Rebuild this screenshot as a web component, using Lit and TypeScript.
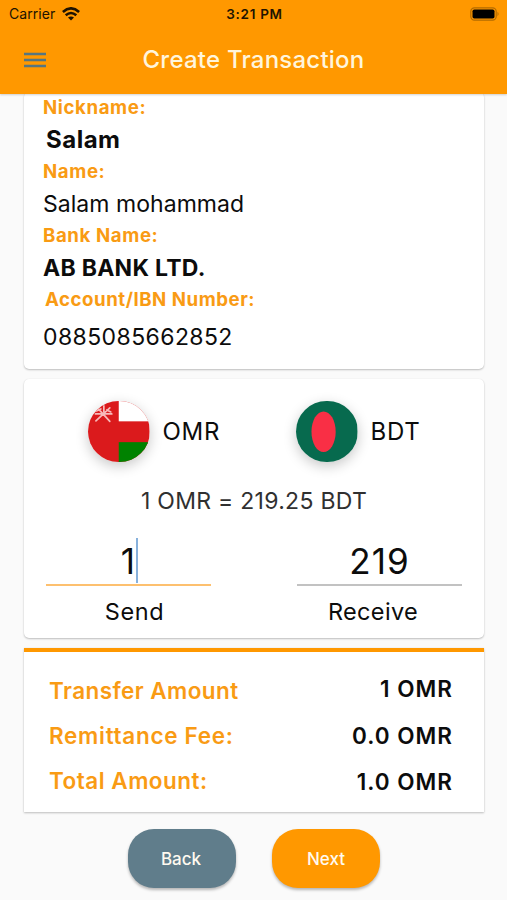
import { LitElement, html, css, svg } from "lit";
import { customElement, property } from "lit/decorators.js";

const omanFlag = svg`
  <rect width="62" height="62" fill="#db1a1c"/>
  <rect x="31" width="31" height="20.5" fill="#fff"/>
  <rect x="31" y="41.5" width="31" height="20.5" fill="#008200"/>
  <g stroke="#f7b9b9" stroke-width="1.7" fill="none" stroke-linecap="round">
    <path d="M8 20 22 7M10 7.500 22 20.500M7.500 13H24M16 5V11M8.500 10 13 8M19 9 23 11"/>
  </g>`;

const bangladeshFlag = svg`
  <rect width="62" height="62" fill="#076a4e"/>
  <ellipse cx="27.800" cy="31" rx="12.200" ry="20.500" fill="#f92f45"/>`;

@customElement("currency-badge")
class CurrencyBadge extends LitElement {
  @property() code = "";
  static styles = css`
    :host { display: flex; align-items: center; }
    .flag {
      width: 61.5px; height: 61.5px; border-radius: 50%; overflow: hidden;
      box-shadow: 0 4px 13px rgba(0, 0, 0, 0.22);
    }
    .flag svg { display: block; width: 100%; height: 100%; }
    .code {
      margin-left: 13px; padding-top: 2px; font-size: 24px; line-height: 30px;
      letter-spacing: 0.75px; color: #0c0c0c;
    }
  `;
  render() {
    return html`
      <div class="flag">
        <svg viewBox="0 0 62 62">${this.code === "OMR" ? omanFlag : bangladeshFlag}</svg>
      </div>
      <span class="code">${this.code}</span>`;
  }
}

@customElement("app-root")
class AppRoot extends LitElement {
  static styles = css`
    :host {
      display: block; width: 507px; height: 900px; overflow: hidden;
      background: #fafafa; color: #0c0c0c;
      font-family: "Inter", "Liberation Sans", sans-serif;
    }
    * { box-sizing: border-box; }
    .header {
      position: relative; z-index: 1; height: 94px; background: #ff9800;
      box-shadow: 0 1px 2px rgba(0, 0, 0, 0.18);
    }
    .status {
      display: grid; grid-template-columns: 1fr auto 1fr; align-items: center;
      height: 27px; padding: 0 7px 0 9px; color: #201300;
    }
    .carrier { display: flex; align-items: center; gap: 7px; font-size: 14px; }
    .carrier span { letter-spacing: 0.06px; }
    .wifi, .battery { display: block; }
    .clock { font-size: 13.5px; font-weight: 600; letter-spacing: 0.7px; }
    .battery { justify-self: end; }
    .bar {
      display: grid; grid-template-columns: 1fr auto 1fr; align-items: center;
      height: 64px; padding: 0 24px;
    }
    .menu { display: block; margin-top: 1px; }
    .title { color: #fff5dc; font-size: 24px; font-weight: 500; letter-spacing: 0.22px; }

    .body { display: flex; flex-direction: column; padding: 0 23px 0 24px; }
    .card {
      background: #fff; border-radius: 5px;
      box-shadow: 0 1px 2px rgba(0, 0, 0, 0.24), 0 0 1px rgba(0, 0, 0, 0.08);
    }
    .recipient { margin-top: -2px; height: 277px; padding-left: 19px; }
    .recipient div { height: 32px; line-height: 32px; white-space: nowrap; }
    .recipient .label { color: #f99b14; font-size: 18.7px; font-weight: 700; letter-spacing: 0.58px; }
    .recipient .account { padding-left: 2px; letter-spacing: 0.51px; }
    .recipient .nickname { padding-left: 3px; font-size: 24px; font-weight: 700; letter-spacing: 0.5px; }
    .recipient .name { font-size: 23px; letter-spacing: 0.04px; }
    .recipient .bank { font-size: 23px; font-weight: 700; letter-spacing: 0.28px; }
    .recipient .number { height: 42px; line-height: 42px; font-size: 23px; letter-spacing: 0.41px; }

    .exchange { margin-top: 10px; height: 259px; padding-top: 21.500px; }
    .pair { display: grid; grid-template-columns: 208px 1fr; padding-left: 64px; }
    .rate {
      margin-top: 24px; line-height: 30px; text-align: center;
      font-size: 23px; letter-spacing: 0.28px; color: #303030;
    }
    .fields { display: flex; justify-content: space-between; margin-top: 22px; padding: 0 22px; }
    .field { width: 165px; text-align: center; }
    .amount {
      display: flex; justify-content: center; height: 48px; line-height: 47px;
      border-bottom: 2px solid #c2c2c2; font-size: 35px; letter-spacing: 1.1px;
    }
    .active .amount { border-color: #fdc06f; }
    .digits { position: relative; }
    .caret { position: absolute; right: -2px; top: 0; width: 2.4px; height: 45px; background: #87b1dc; }
    .caption { margin-top: 11px; line-height: 30px; font-size: 23.5px; letter-spacing: 0.35px; }
    .active .caption { padding-left: 12px; letter-spacing: 0.55px; }
    .passive .caption { padding-right: 13px; }

    .summary {
      display: flex; justify-content: space-between; margin-top: 10px; height: 164px;
      padding: 0 31px 0 25px; border-top: 4px solid #ff9800; border-radius: 0;
      font-size: 22.5px; font-weight: 600;
    }
    .keys { padding-top: 16px; line-height: 45px; color: #f99b14; }
    .values { padding-top: 14px; line-height: 46.500px; text-align: right; letter-spacing: 1px; }
    .transfer { letter-spacing: 0.42px; }
    .fee { letter-spacing: 0.7px; }
    .total { letter-spacing: 0.49px; }

    .actions { display: flex; justify-content: center; gap: 36px; margin-top: 17px; }
    .button {
      width: 108px; height: 59px; padding: 0; border: 0; border-radius: 26px;
      background: #ff9800; color: #fffaf0; font: 500 17px "Inter", sans-serif;
      box-shadow: 0 2px 3px rgba(0, 0, 0, 0.28);
    }
    .back { padding-right: 2px; background: #607d8b; }
  `;

  render() {
    return html`
      <div class="header">
        <div class="status">
          <div class="carrier">
            <span>Carrier</span>
            <svg class="wifi" width="18" height="14" viewBox="0 0 18 14">
              <g fill="none" stroke="#201300" stroke-width="2.600">
                <path d="M.9 5Q9-2.300 17.100 5"/>
                <path d="M3.700 8.300Q9 3.700 14.300 8.300"/>
              </g>
              <path d="M6 10.600Q9 8.200 12 10.600L9 13.600Z" fill="#201300"/>
            </svg>
          </div>
          <div class="clock">3:21 PM</div>
          <svg class="battery" width="30" height="14" viewBox="0 0 30 14">
            <rect x=".8" y=".8" width="25.400" height="12.400" rx="3.600" fill="none" stroke="#b36b00" stroke-width="1.200"/>
            <rect x="2.500" y="2.500" width="22" height="9" rx="1.800" fill="#000"/>
            <path d="M27.500 4.800Q29.700 7 27.500 9.200Z" fill="#b36b00"/>
          </svg>
        </div>
        <div class="bar">
          <svg class="menu" width="22" height="16" viewBox="0 0 22 16">
            <path d="M0 2H22M0 8H22M0 14H22" stroke="#567680" stroke-width="2.500"/>
          </svg>
          <div class="title">Create Transaction</div>
        </div>
      </div>
      <div class="body">
        <div class="card recipient">
          <div class="label">Nickname:</div>
          <div class="nickname">Salam</div>
          <div class="label">Name:</div>
          <div class="name">Salam mohammad</div>
          <div class="label">Bank Name:</div>
          <div class="bank">AB BANK LTD.</div>
          <div class="label account">Account/IBN Number:</div>
          <div class="number">0885085662852</div>
        </div>
        <div class="card exchange">
          <div class="pair">
            <currency-badge code="OMR"></currency-badge>
            <currency-badge code="BDT"></currency-badge>
          </div>
          <div class="rate">1 OMR = 219.25 BDT</div>
          <div class="fields">
            <div class="field active">
              <div class="amount"><span class="digits">1<i class="caret"></i></span></div>
              <div class="caption">Send</div>
            </div>
            <div class="field passive">
              <div class="amount">219</div>
              <div class="caption">Receive</div>
            </div>
          </div>
        </div>
        <div class="card summary">
          <div class="keys">
            <div class="transfer">Transfer Amount</div>
            <div class="fee">Remittance Fee:</div>
            <div class="total">Total Amount:</div>
          </div>
          <div class="values">
            <div>1 OMR</div>
            <div>0.0 OMR</div>
            <div>1.0 OMR</div>
          </div>
        </div>
        <div class="actions">
          <button class="button back">Back</button>
          <button class="button">Next</button>
        </div>
      </div>`;
  }
}
